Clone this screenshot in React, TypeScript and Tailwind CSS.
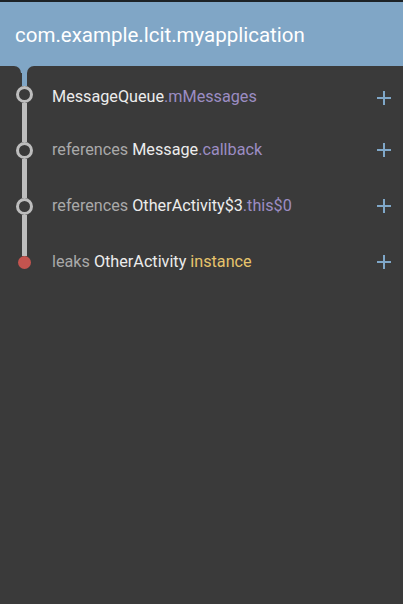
const rows = [
  { parts: [["MessageQueue", "text-[#ececec]"], [".mMessages", "text-[#9c8dc3]"]] },
  {
    parts: [
      ["references ", "text-[#a9a9a9]"],
      ["Message", "text-[#ececec]"],
      [".callback", "text-[#9c8dc3]"],
    ],
  },
  {
    parts: [
      ["references ", "text-[#a9a9a9]"],
      ["OtherActivity$3", "text-[#ececec]"],
      [".this$0", "text-[#9c8dc3]"],
    ],
  },
  {
    parts: [
      ["leaks ", "text-[#a9a9a9]"],
      ["OtherActivity ", "text-[#ececec]"],
      ["instance", "text-[#e6c46c]"],
    ],
  },
];

const Plus = () => (
  <svg width="16" height="16" viewBox="0 0 16 16" className="shrink-0">
    <path d="M8 1v14M1 8h14" stroke="#7fa7c8" strokeWidth="2" />
  </svg>
);

export default function App() {
  return (
    <div
      className="w-[403px] h-[604px] bg-[#3a3a3a] flex flex-col"
      style={{ fontFamily: "Roboto, 'Liberation Sans', sans-serif" }}
    >
      <div className="h-[2px] bg-[#1d2226]" />
      <div className="h-[64px] bg-[#80a6c6] flex items-center pl-[15px] pt-[2px]">
        <span className="text-[20.5px] text-white">com.example.lcit.myapplication</span>
      </div>
      <div className="h-[7px] flex bg-[#80a6c6]">
        <div className="w-[21px] bg-[#3a3a3a] rounded-tr-[7px]" />
        <div className="w-[6px]" />
        <div className="flex-1 bg-[#3a3a3a] rounded-tl-[7px]" />
      </div>
      {rows.map((row, i) => {
        const first = i === 0;
        const last = i === rows.length - 1;
        return (
          <div key={i} className={`flex ${first ? "h-[49px]" : "h-[56px]"}`}>
            <div className="w-[48px] flex flex-col items-center">
              <div
                className={`w-[5px] ${first ? "h-[13px] bg-[#80a6c6]" : "h-[20px] bg-[#bdbdbd]"} ${last ? "h-[22px]" : ""}`}
              />
              {last ? (
                <div className="w-[13px] h-[13px] rounded-full bg-[#c4544f]" />
              ) : (
                <div className="w-[17px] h-[17px] rounded-full border-[3px] border-[#bdbdbd] bg-[#3a3a3a]" />
              )}
              {!last && <div className="w-[5px] flex-1 bg-[#bdbdbd]" />}
            </div>
            <div className="flex-1 flex items-center pl-[4px] pr-[11px]">
              <div className="flex-1 text-[16.2px] whitespace-pre">
                {row.parts.map(([t, c], j) => (
                  <span key={j} className={c}>
                    {t}
                  </span>
                ))}
              </div>
              <Plus />
            </div>
          </div>
        );
      })}
    </div>
  );
}
